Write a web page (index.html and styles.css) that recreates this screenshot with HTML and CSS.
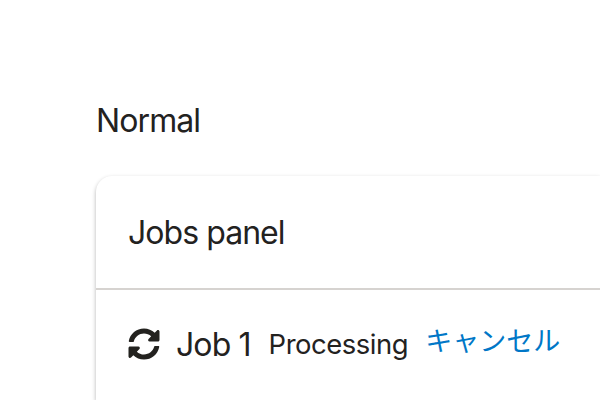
FILE: index.html
```html
<!DOCTYPE html>
<html lang="ja">
<head>
<meta charset="utf-8">
<title>Jobs panel</title>
<link rel="stylesheet" href="styles.css">
</head>
<body>
<main class="story">
  <h2 class="title">Normal</h2>
  <section class="panel">
    <header class="panel-header"><span class="panel-title">Jobs panel</span></header>
    <div class="job">
      <svg class="icon" viewBox="0 0 512 512" aria-hidden="true"><path fill="currentColor" d="M370.72 133.28C339.458 104.008 298.888 87.962 255.848 88c-77.458.068-144.328 53.178-162.791 126.85-1.344 5.363-6.122 9.15-11.651 9.15H24.103c-7.498 0-13.194-6.807-11.807-14.176C33.933 94.924 134.813 8 256 8c66.448 0 126.791 26.136 171.315 68.685L463.03 40.97C478.149 25.851 504 36.559 504 57.941V192c0 13.255-10.745 24-24 24H345.941c-21.382 0-32.09-25.851-16.971-40.971l41.75-41.749zM32 296h134.059c21.382 0 32.09 25.851 16.971 40.971l-41.75 41.75c31.262 29.273 71.835 45.319 114.876 45.28 77.418-.07 144.315-53.144 162.787-126.849 1.344-5.363 6.122-9.15 11.651-9.15h57.304c7.498 0 13.194 6.807 11.807 14.176C478.067 417.076 377.187 504 256 504c-66.448 0-126.791-26.136-171.315-68.685L48.97 471.03C33.851 486.149 8 475.441 8 454.059V320c0-13.255 10.745-24 24-24z"/></svg>
      <span class="name">Job 1</span>
      <span class="status">Processing</span>
      <a class="cancel">キャンセル</a>
    </div>
  </section>
</main>
</body>
</html>
```

FILE: styles.css
```css
body {
  margin: 0;
  background: #fff;
  color: #23221f;
  font-family: Inter, "Noto Sans CJK JP", sans-serif;
}
.story {
  display: flex;
  flex-direction: column;
  box-sizing: border-box;
  height: 100vh;
  overflow: hidden;
  padding: 97px 0 0 96px;
}
.title {
  margin: 0 0 31px;
  font-size: 32px;
  font-weight: 400;
  line-height: 48px;
  letter-spacing: -0.9px;
}
.panel {
  flex: 1;
  border-radius: 16px 0 0 0;
  background: #fff;
  box-shadow: 0 2px 4px rgba(3, 3, 2, 0.3);
}
.panel-header {
  padding: 33px 32px 31px;
  border-bottom: 2px solid #d6d3d0;
  font-size: 32px;
  line-height: 48px;
  letter-spacing: -0.95px;
}
.job {
  display: flex;
  align-items: center;
  padding: 30px 0 0 32px;
  line-height: 44px;
  white-space: nowrap;
}
.icon {
  flex: none;
  width: 32px;
  height: 32px;
  margin-right: 16px;
}
.name {
  margin: 2px 18px 0 0;
  font-size: 32px;
  letter-spacing: -0.9px;
}
.status {
  margin: 0 17px 0 0;
  font-size: 27.43px;
  letter-spacing: -0.45px;
}
.cancel {
  margin-bottom: 4px;
  color: #0077c7;
  font-size: 27px;
}
```
